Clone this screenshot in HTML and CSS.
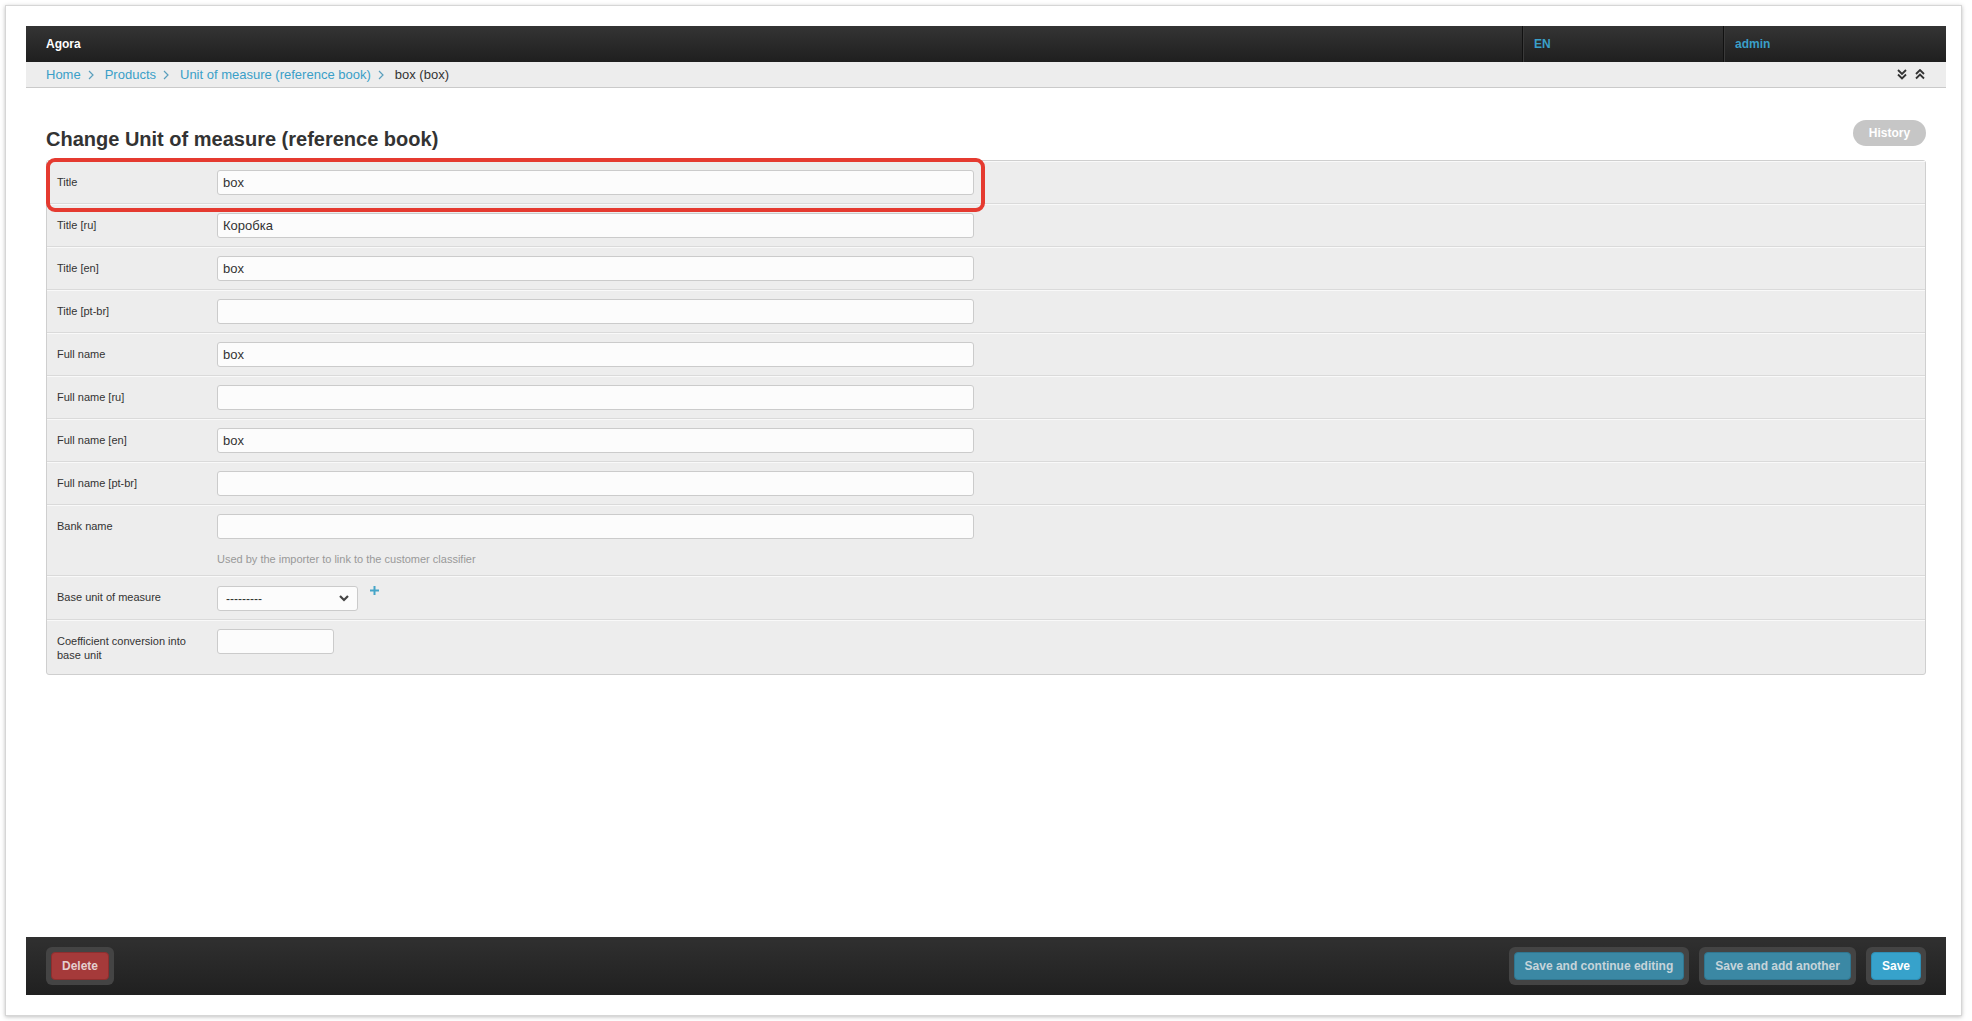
FILE: index.html
```html
<!DOCTYPE html>
<html lang="en">
<head>
  <meta charset="UTF-8" />
  <title>Change Unit of measure (reference book) | Agora</title>
  <link rel="stylesheet" href="styles.css">
</head>
<body>
  <div class="frame">
    <header class="topbar">
      <div class="brand">Agora</div>
      <a class="topbar-cell lang">EN</a>
      <a class="topbar-cell user">admin</a>
    </header>

    <nav class="crumbs">
      <a href="#">Home</a>
      <svg class="crumb-sep" width="6" height="10" viewBox="0 0 6 10"><polyline points="1,1 5,5 1,9" fill="none" stroke="#5a9fbd" stroke-width="1.2"/></svg>
      <a href="#">Products</a>
      <svg class="crumb-sep" width="6" height="10" viewBox="0 0 6 10"><polyline points="1,1 5,5 1,9" fill="none" stroke="#5a9fbd" stroke-width="1.2"/></svg>
      <a href="#">Unit of measure (reference book)</a>
      <svg class="crumb-sep" width="6" height="10" viewBox="0 0 6 10"><polyline points="1,1 5,5 1,9" fill="none" stroke="#5a9fbd" stroke-width="1.2"/></svg>
      <span class="crumb-current">box (box)</span>
      <div class="crumb-tools">
        <svg width="10" height="11" viewBox="0 0 10 11"><polyline points="1,1 5,5 9,1" fill="none" stroke="#333" stroke-width="1.8"/><polyline points="1,5.5 5,9.5 9,5.5" fill="none" stroke="#333" stroke-width="1.8"/></svg>
        <svg width="10" height="11" viewBox="0 0 10 11"><polyline points="1,5 5,1 9,5" fill="none" stroke="#333" stroke-width="1.8"/><polyline points="1,9.5 5,5.5 9,9.5" fill="none" stroke="#333" stroke-width="1.8"/></svg>
      </div>
    </nav>

    <main class="content">
      <div class="content-head">
        <h1>Change Unit of measure (reference book)</h1>
        <a class="history" href="#">History</a>
      </div>

      <form class="panel">
        <div class="mark"></div>

        <div class="row">
          <label>Title</label>
          <div class="field"><input class="text" type="text" value="box"></div>
        </div>
        <div class="row">
          <label>Title [ru]</label>
          <div class="field"><input class="text" type="text" value="Коробка"></div>
        </div>
        <div class="row">
          <label>Title [en]</label>
          <div class="field"><input class="text" type="text" value="box"></div>
        </div>
        <div class="row">
          <label>Title [pt-br]</label>
          <div class="field"><input class="text" type="text" value=""></div>
        </div>
        <div class="row">
          <label>Full name</label>
          <div class="field"><input class="text" type="text" value="box"></div>
        </div>
        <div class="row">
          <label>Full name [ru]</label>
          <div class="field"><input class="text" type="text" value=""></div>
        </div>
        <div class="row">
          <label>Full name [en]</label>
          <div class="field"><input class="text" type="text" value="box"></div>
        </div>
        <div class="row">
          <label>Full name [pt-br]</label>
          <div class="field"><input class="text" type="text" value=""></div>
        </div>
        <div class="row">
          <label>Bank name</label>
          <div class="field">
            <input class="text" type="text" value="">
            <p class="help">Used by the importer to link to the customer classifier</p>
          </div>
        </div>
        <div class="row">
          <label>Base unit of measure</label>
          <div class="field inline">
            <div class="select-wrap">
              <select class="select"><option>---------</option></select>
              <svg class="select-arrow" width="10" height="7" viewBox="0 0 10 7"><polyline points="1,1 5,5 9,1" fill="none" stroke="#444" stroke-width="2.2"/></svg>
            </div>
            <a class="add-link" href="#">
              <svg width="9" height="9" viewBox="0 0 9 9"><path d="M4.5 0v9M0 4.5h9" stroke="#46a5c8" stroke-width="2"/></svg>
            </a>
          </div>
        </div>
        <div class="row last">
          <label>Coefficient conversion into base unit</label>
          <div class="field"><input class="text short" type="text" value=""></div>
        </div>
      </form>
    </main>

    <footer class="actions">
      <div class="btn-wrap"><button class="btn btn-delete" type="button">Delete</button></div>
      <div class="actions-right">
        <div class="btn-wrap"><button class="btn btn-muted" type="button">Save and continue editing</button></div>
        <div class="btn-wrap"><button class="btn btn-muted" type="button">Save and add another</button></div>
        <div class="btn-wrap"><button class="btn btn-save" type="button">Save</button></div>
      </div>
    </footer>
  </div>
</body>
</html>
```

FILE: styles.css
```css
:root {
  --link: #3a9fc8;
  --text: #333;
  --row-bg: #ededed;
  --border: #cfcfcf;
}

* {
  box-sizing: border-box;
}

body {
  margin: 0;
  background: #fff;
  font-family: "Liberation Sans", Arial, sans-serif;
  color: var(--text);
}

.frame {
  margin: 5px 10px 5px 5px;
  height: 1011px;
  padding: 20px 15px 20px 20px;
  border: 1px solid #d6d6d6;
  box-shadow: 0 1px 4px rgba(0, 0, 0, 0.25);
  background: #fff;
  display: flex;
  flex-direction: column;
}

/* top bar */
.topbar {
  display: flex;
  height: 36px;
  background: linear-gradient(#343434, #1f1f1f);
  font-size: 12px;
  font-weight: bold;
}

.brand {
  flex: 1;
  color: #fff;
  padding-left: 20px;
  line-height: 36px;
}

.topbar-cell {
  color: var(--link);
  line-height: 36px;
  padding-left: 11px;
  border-left: 1px solid #111;
  box-shadow: inset 1px 0 0 #3a3a3a;
  text-decoration: none;
}

.lang {
  width: 201px;
}

.user {
  width: 223px;
}

/* breadcrumbs */
.crumbs {
  display: flex;
  align-items: center;
  height: 26px;
  padding: 0 20px;
  background: #ededed;
  border-bottom: 1px solid #cacaca;
  font-size: 13px;
}

.crumbs a {
  color: var(--link);
  text-decoration: none;
}

.crumb-sep {
  margin: 0 11px 0 7px;
}

.crumb-current {
  color: #333;
}

.crumb-tools {
  margin-left: auto;
  display: flex;
  gap: 8px;
  padding-right: 1px;
}

/* content */
.content {
  flex: 1;
  padding: 32px 20px 0;
}

.content-head {
  display: flex;
  justify-content: space-between;
  align-items: flex-start;
}

h1 {
  margin: 7px 0 0;
  font-size: 20px;
  line-height: 24px;
  font-weight: bold;
  color: #333;
}

.history {
  display: block;
  width: 73px;
  height: 26px;
  line-height: 26px;
  border-radius: 13px;
  background: #c6c6c6;
  color: #fff;
  font-size: 12px;
  font-weight: bold;
  text-align: center;
  text-decoration: none;
}

.panel {
  position: relative;
  margin-top: 9px;
  background: var(--row-bg);
  border: 1px solid var(--border);
  border-radius: 3px;
}

.mark {
  position: absolute;
  left: -1px;
  top: -3px;
  width: 939px;
  height: 54px;
  border: 4px solid #e53a30;
  border-radius: 9px;
}

.row {
  display: grid;
  grid-template-columns: 160px 1fr;
  padding: 8px 10px;
  border-top: 1px solid #f9f9f9;
  border-bottom: 1px solid #dadada;
}

.row:first-of-type {
  border-top: none;
}

.row.last {
  border-bottom: none;
}

.row label {
  font-size: 11px;
  line-height: 14px;
  padding: 5px 10px 4px 0;
  color: #333;
}

.field.inline {
  display: flex;
  align-items: flex-start;
}

.text {
  display: block;
  width: 757px;
  height: 25px;
  padding: 0 5px;
  border: 1px solid #cbcbcb;
  border-radius: 3px;
  background: #fcfcfc;
  font-family: inherit;
  font-size: 13px;
  color: #333;
}

.text.short {
  width: 117px;
}

.help {
  margin: 12px 0 0;
  font-size: 11px;
  line-height: 16px;
  color: #999;
}

.select-wrap {
  position: relative;
  width: 141px;
  height: 25px;
  margin-top: 1px;
}

.select {
  width: 100%;
  height: 100%;
  padding: 0 8px;
  border: 1px solid #cbcbcb;
  border-radius: 3px;
  background: #fcfcfc;
  font-family: inherit;
  font-size: 12px;
  color: #333;
  appearance: none;
  -webkit-appearance: none;
}

.select-arrow {
  position: absolute;
  right: 9px;
  top: 9px;
}

.add-link {
  display: block;
  margin: 0 0 0 12px;
  line-height: 0;
  padding-top: 1px;
}

/* bottom bar */
.actions {
  display: flex;
  justify-content: space-between;
  align-items: center;
  height: 58px;
  padding: 0 20px;
  background: linear-gradient(#303030, #202020);
}

.actions-right {
  display: flex;
  gap: 10px;
}

.btn-wrap {
  padding: 5px;
  background: #444;
  border-radius: 6px;
}

.btn {
  display: block;
  height: 28px;
  padding: 0 10px;
  border-radius: 4px;
  font-family: inherit;
  font-size: 12px;
  font-weight: bold;
  cursor: pointer;
}

.btn-delete {
  background: #a53a3a;
  border: 1px solid #8e2e2e;
  color: #e4cfcf;
}

.btn-muted {
  background: #3b88a4;
  border: 1px solid #2f7690;
  color: #c6d4da;
}

.btn-save {
  background: #37a2cb;
  border: 1px solid #2d8fb6;
  color: #fff;
}
```
